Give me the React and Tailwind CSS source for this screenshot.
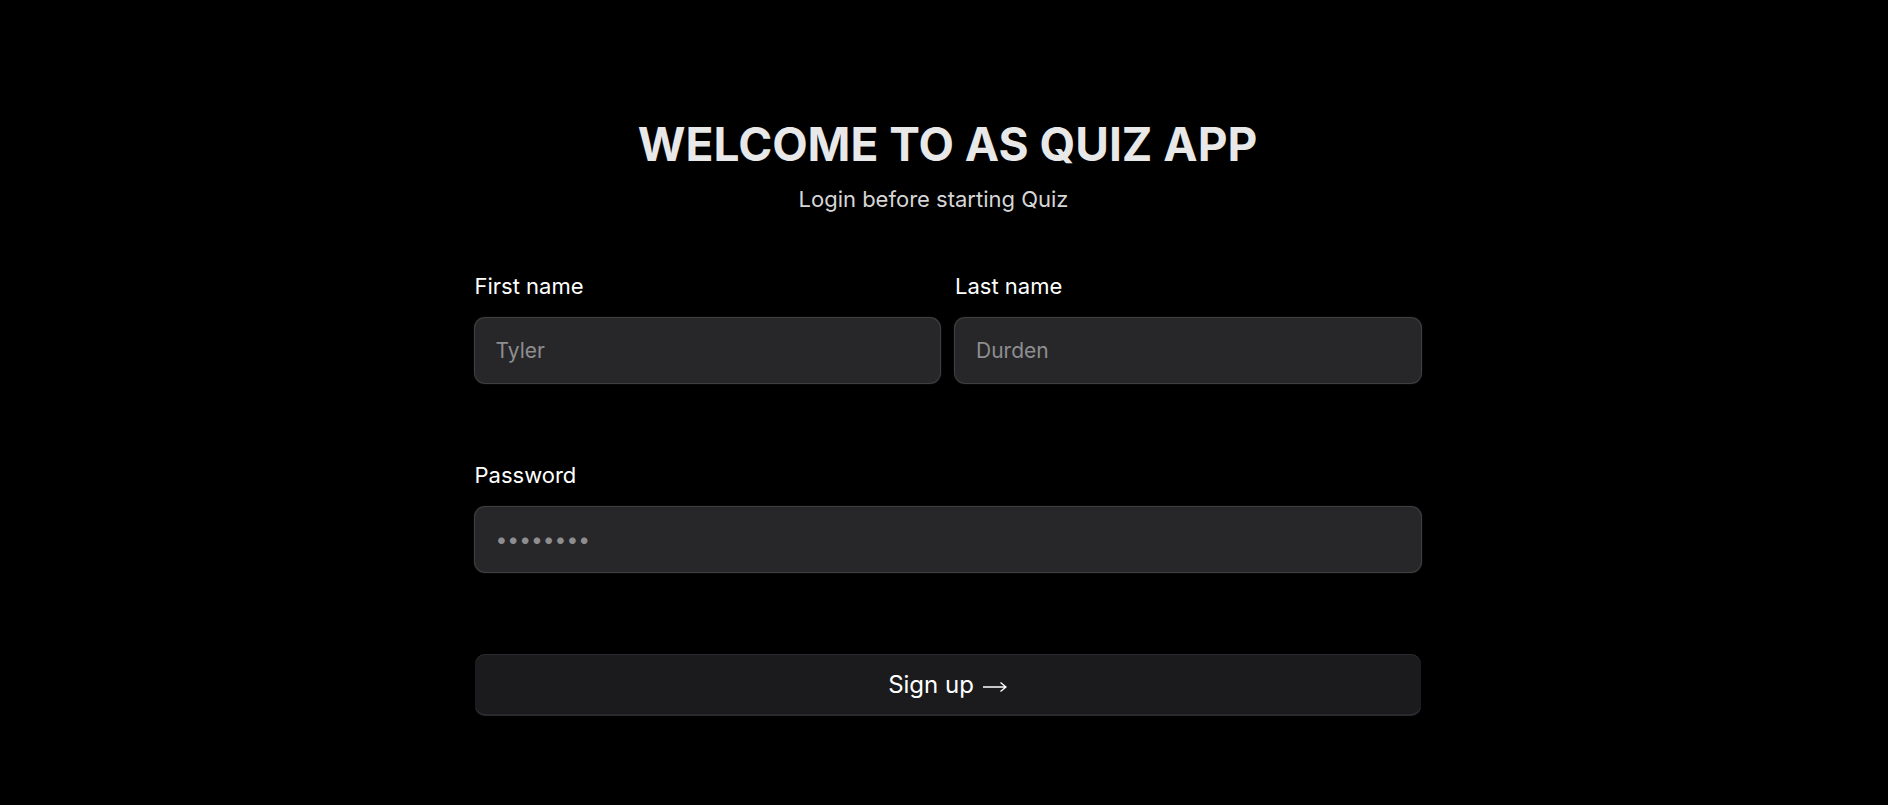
import { useState } from 'react'

function Field({ label, placeholder, type = 'text', value, onChange }) {
  return (
    <div className="flex flex-col flex-1">
      <label className="text-[22px] leading-[28px] text-white mb-[18px]">
        {label}
      </label>
      <input
        type={type}
        value={value}
        onChange={onChange}
        placeholder={placeholder}
        className="h-[65px] w-full rounded-[10px] bg-[#27272a] px-[21px] text-[21px] text-white
                   placeholder:text-[#8e8e90] shadow-[0px_0px_1px_1px_#464646] outline-none"
      />
    </div>
  )
}

export default function App() {
  const [form, setForm] = useState({ first: '', last: '', password: '' })

  const update = (key) => (e) => setForm({ ...form, [key]: e.target.value })

  return (
    <div
      className="min-h-screen bg-black flex flex-col items-center pt-[121px] pl-[7px]"
      style={{ fontFamily: 'Inter, "Noto Sans", sans-serif' }}
    >
      <h1 className="text-[46px] leading-none font-bold text-[#e8e8e8]">
        WELCOME TO AS QUIZ APP
      </h1>
      <p className="mt-[18px] pr-[28px] text-[22px] leading-[28px] text-[#d6d6d6]">
        Login before starting Quiz
      </p>

      <form
        className="w-[946px] mt-[59px] flex flex-col"
        onSubmit={(e) => e.preventDefault()}
      >
        <div className="flex gap-[15px]">
          <Field label="First name" placeholder="Tyler" value={form.first} onChange={update('first')} />
          <Field label="Last name" placeholder="Durden" value={form.last} onChange={update('last')} />
        </div>

        <div className="mt-[78px] flex">
          <Field
            label="Password"
            type="password"
            placeholder="••••••••"
            value={form.password}
            onChange={update('password')}
          />
        </div>

        <button
          type="submit"
          className="mt-[82px] h-[62px] w-full rounded-[10px] bg-[#1b1b1d] text-[24px] text-white
                     flex items-center justify-center gap-[9px]
                     shadow-[0px_1px_0px_0px_#2a2a2e_inset,0px_-2px_0px_0px_#2a2a2e_inset]"
        >
          <span>Sign up</span>
          {/* thin long arrow */}
          <svg width="24" height="12" viewBox="0 0 24 12" fill="none" className="mt-[3px]">
            <path d="M0 6H23M17.5 1.5L23 6L17.5 10.5" stroke="white" strokeWidth="1.4" />
          </svg>
        </button>
      </form>
    </div>
  )
}
